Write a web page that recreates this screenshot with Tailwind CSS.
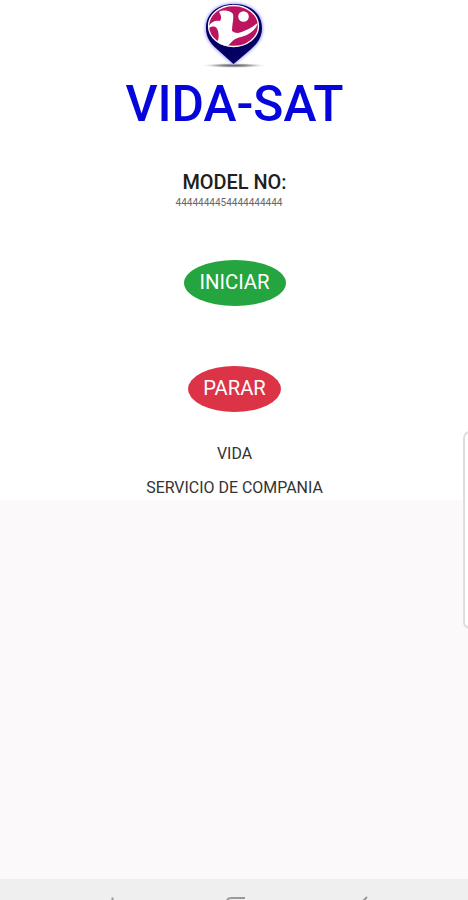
<!DOCTYPE html>
<html lang="es">
<head>
<meta charset="utf-8">
<title>VIDA-SAT</title>
<script src="https://cdn.jsdelivr.net/npm/@tailwindcss/browser@4"></script>
</head>
<body class="font-['Roboto',sans-serif]">
<div class="relative flex h-[900px] w-[468px] flex-col overflow-hidden bg-[#fbf9fa]">
  <main class="flex h-[500px] flex-col items-center bg-white">
    <svg class="ml-[2px] h-[74px] w-[90px] shrink-0" viewBox="0 0 90 74">
      <defs>
        <radialGradient id="shade"><stop offset="0" stop-color="#555"/><stop offset=".5" stop-color="#aaa"/><stop offset="1" stop-color="#fff" stop-opacity="0"/></radialGradient>
        <filter id="glow" x="-20%" y="-20%" width="140%" height="140%"><feGaussianBlur stdDeviation="1.4"/></filter>
      </defs>
      <ellipse cx="44" cy="65.500" rx="34" ry="2.600" fill="url(#shade)"/>
      <path d="M44 4C27 4 16 14 16 28C16 38 21 44 28 50L43.500 64L60 50C67 44 72 38 72 28C72 14 61 4 44 4Z" fill="#8f8fff" filter="url(#glow)" stroke="#a8a8ff" stroke-width="2"/>
      <path d="M44 4C27 4 16 14 16 28C16 38 21 44 28 50L43.500 64L60 50C67 44 72 38 72 28C72 14 61 4 44 4Z" fill="#050064"/>
      <ellipse cx="43.500" cy="26" rx="25" ry="20.500" fill="#bd1460" stroke="#fff" stroke-width="1.300"/>
      <path d="M19 26C21 22 25 20 30 21C32 18 31 15 29 12C33 9 41 11 43 14C44 18 42 25 42 31C46 34 50 33 54 31C60 29 63 26 68 23C65 31 59 35 51 37C45 38 42 41 38 46C34 46 30 44 27 42C29 39 29 35 28 31C27 27 24 25 19 28Z" fill="#fff"/>
      <circle cx="53.500" cy="16.500" r="5.300" fill="#fff"/>
    </svg>
    <h1 class="ml-px h-[58px] pt-px text-[49.700px] leading-[58px] font-medium whitespace-nowrap text-[#0505dc]">VIDA-SAT</h1>
    <h2 class="mt-[39px] ml-px h-6 text-[19.900px] leading-6 font-medium whitespace-nowrap text-[#202020]">MODEL NO:</h2>
    <p class="mr-[10px] h-4 text-[10px] leading-[15px] whitespace-nowrap text-[#666]">4444444454444444444</p>
    <button class="mt-[49px] ml-px h-[46px] w-[102px] shrink-0 rounded-[50%] bg-[#24a53f] pb-0.5 text-[20.300px] leading-6 whitespace-nowrap text-white">INICIAR</button>
    <button class="mt-[60px] ml-px h-[46px] w-[93px] shrink-0 rounded-[50%] bg-[#dc3347] pb-0.5 text-[20.200px] leading-6 whitespace-nowrap text-white">PARAR</button>
    <p class="mt-[32px] ml-px h-5 text-[15.900px] leading-5 whitespace-nowrap text-[#333]">VIDA</p>
    <p class="mt-[14px] ml-px h-5 text-[15.950px] leading-5 whitespace-nowrap text-[#333]">SERVICIO DE COMPANIA</p>
  </main>
  <footer class="mt-auto h-[21px] bg-[#eeefee]">
    <svg class="block h-[21px] w-[468px]" viewBox="0 0 468 21" fill="none" stroke="#999" stroke-width="2">
      <path d="M112.500 18.500V21"/>
      <path d="M227 21Q228 19 231 19H245"/>
      <path d="M367 18L363 22"/>
    </svg>
  </footer>
  <div class="absolute top-[431px] left-[463px] h-[198px] w-5 rounded-[7px] border-2 border-[#dedede] bg-white"></div>
</div>
</body>
</html>
